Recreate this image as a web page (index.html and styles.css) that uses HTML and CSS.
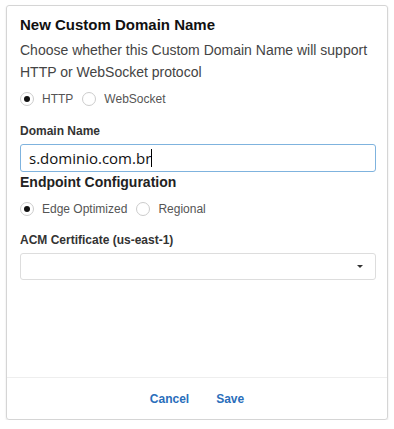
FILE: index.html
```html
<!DOCTYPE html>
<html>
<head>
<meta charset="utf-8">
<link rel="stylesheet" href="styles.css">
</head>
<body>
<div class="card">
  <div class="content">
    <h2 class="title">New Custom Domain Name</h2>
    <p class="desc">Choose whether this Custom Domain Name will support HTTP or WebSocket protocol</p>
    <div class="radios">
      <label class="radio"><span class="dot on"></span>HTTP</label>
      <label class="radio"><span class="dot"></span>WebSocket</label>
    </div>
    <div class="label">Domain Name</div>
    <div class="input focus"><span class="val">s.dominio.com.br</span><span class="caret"></span></div>
    <h3 class="sub">Endpoint Configuration</h3>
    <div class="radios r2">
      <label class="radio"><span class="dot on"></span>Edge Optimized</label>
      <label class="radio"><span class="dot"></span>Regional</label>
    </div>
    <div class="label l2">ACM Certificate (us-east-1)</div>
    <div class="input select"><span class="arrow"></span></div>
  </div>
  <div class="footer">
    <button class="btn">Cancel</button>
    <button class="btn">Save</button>
  </div>
</div>
</body>
</html>
```
FILE: styles.css
```css
* { box-sizing: border-box; }
html, body { margin: 0; padding: 0; background: #fff; }
body { padding: 5px 6px 0 6px; font-family: "Liberation Sans", Arial, sans-serif; color: #333; }
.card {
  width: 382px; height: 415px;
  border: 1px solid #d5d5d5; border-radius: 3px;
  box-shadow: 0 1px 2px rgba(0,0,0,0.12);
  display: flex; flex-direction: column;
}
.content { flex: 1; padding: 10px 13px 0 13px; }
.title { margin: 0; font-size: 15px; font-weight: bold; color: #111; line-height: 18px; }
.desc { margin: 5px 0 0 0; font-size: 14px; line-height: 22px; color: #444; }
.radios { display: flex; align-items: center; gap: 9px; margin-top: 6px; height: 20px; font-size: 12px; color: #555; }
.radio { display: flex; align-items: center; gap: 8px; }
.dot { width: 14px; height: 14px; border-radius: 50%; border: 1px solid #ccc; background: #fff; position: relative; }
.dot.on::after { content: ""; position: absolute; left: 3px; top: 3px; width: 6px; height: 6px; border-radius: 50%; background: #111; }
.label { margin-top: 15px; font-size: 12px; font-weight: bold; color: #333; line-height: 15px; }
.input { margin-top: 6px; height: 28px; width: 356px; border: 1px solid #ddd; border-radius: 3px; display: flex; align-items: center; padding-left: 8px; }
.input.focus { margin-top: 5px; border-color: #7fb3de; }
.val { font-family: "Open Sans", sans-serif; font-size: 15px; color: #111; }
.caret { display: inline-block; width: 1px; height: 18px; background: #000; margin-left: 0; }
.sub { margin: 1px 0 0 0; font-size: 14px; font-weight: bold; color: #222; line-height: 18px; }
.r2 { margin-top: 8px; }
.l2 { margin-top: 14px; }
.select { margin-top: 5px; height: 27px; justify-content: flex-end; padding-right: 12px; }
.arrow { width: 0; height: 0; border-left: 3px solid transparent; border-right: 3px solid transparent; border-top: 3px solid #333; }
.footer { height: 42px; border-top: 1px solid #eee; display: flex; justify-content: center; align-items: center; gap: 27px; margin-bottom: 0; }
.btn { background: none; border: none; padding: 0; font-family: "Liberation Sans", Arial, sans-serif; font-size: 12px; font-weight: bold; color: #2a6ebb; cursor: pointer; }
```
